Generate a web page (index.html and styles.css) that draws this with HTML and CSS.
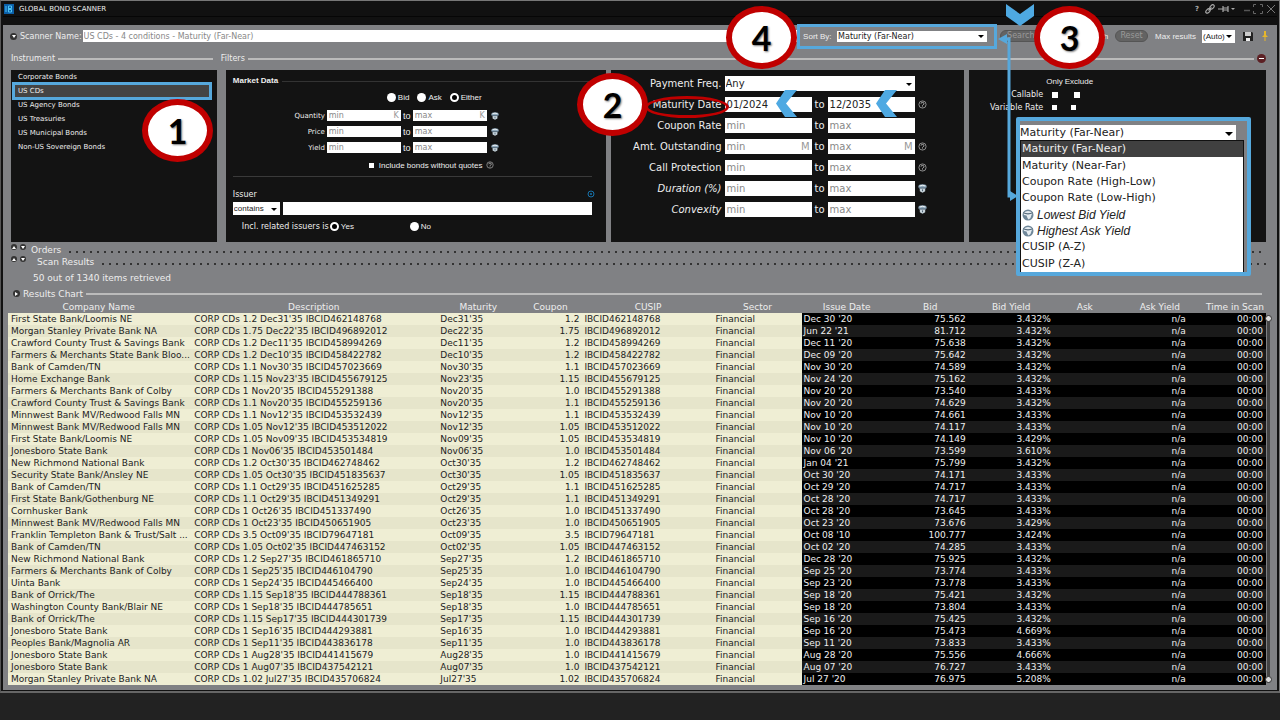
FILE: index.html
```html
<!DOCTYPE html>
<html lang="en">
<head>
<meta charset="utf-8">
<title>Global Bond Scanner</title>
<link rel="stylesheet" href="styles.css">
</head>
<body>
<svg class="defs" aria-hidden="true">
  <symbol id="help" viewBox="0 0 10 10"><circle cx="5" cy="5" r="4" fill="none" stroke="#999" stroke-width="1"/><path d="M3.4 4a1.6 1.4 0 1 1 2.2 1.3L5 6v.6M5 7.2v.8" fill="none" stroke="#bbb" stroke-width="1"/></symbol>
  <symbol id="globe" viewBox="0 0 12 12"><circle cx="6" cy="6" r="5.500" fill="#6f8799"/><path d="M1.500 4 Q6 0 10.500 4 L9.500 6 L8.500 9 L6.500 10.500 L5.500 9 L4.500 6.500 L2 6Z" fill="#e4ebf0"/><path d="M1.200 3.800Q6 6 10.800 3.800" fill="none" stroke="#54697a" stroke-width="1.200"/></symbol>
  <symbol id="bin" viewBox="0 0 10 10"><ellipse cx="5" cy="3" rx="4.600" ry="2.600" fill="#8fa9bc"/><path d="M2 4.500h6V8L5 9.800 2 8Z" fill="#c6d3db"/><path d="M2 2.200q3-1.400 6 0" fill="none" stroke="#fff"/><path d="M1 4.500h8M5 6v2" stroke="#34495a" stroke-width=".9"/></symbol>
</svg>
<div class="window">
  <header class="titlebar">
    <svg class="logo" viewBox="0 0 10 10"><rect width="10" height="10" fill="#0b5fa8"/><path d="M2 2v6M4.500 2h3v2.500h-3zM4.500 5.500h3V8h-3zM4.500 2v6" fill="none" stroke="#4ec4f4" stroke-width="1"/></svg>
    <h1>GLOBAL BOND SCANNER</h1>
    <div class="wintools">
      <button type="button" aria-label="Help" class="q">?</button>
      <button type="button" aria-label="Link"><svg width="10" height="10" viewBox="0 0 10 10"><g fill="none" stroke="#aaa" stroke-width="1.200"><ellipse cx="7" cy="3" rx="2.600" ry="1.600" transform="rotate(-45 7 3)"/><ellipse cx="3" cy="7" rx="2.600" ry="1.600" transform="rotate(-45 3 7)"/><path d="M3.500 6.500l3-3"/></g></svg></button>
      <button type="button" aria-label="Pin"><svg width="18" height="8" viewBox="0 0 18 8"><path d="M0 4h5M5 1v6M5 3h5M5 5h5M10 1v6" stroke="#aaa" stroke-width="1.200"/><path d="M13 3h4l-2 2z" fill="#aaa"/></svg></button>
      <button type="button" aria-label="Minimize" class="min"><svg width="6" height="8" viewBox="0 0 6 8"><path d="M0 5.500h6" stroke="#555" stroke-width="1.500"/></svg></button>
      <button type="button" aria-label="Maximize"><svg width="10" height="10" viewBox="0 0 10 10"><path d="M.5 3V.5H3M7 .5h2.500V3M9.500 7v2.500H7M3 9.500H.5V7" fill="none" stroke="#666"/></svg></button>
      <button type="button" aria-label="Close"><svg width="10" height="10" viewBox="0 0 10 10"><path d="M1 1l8 8M9 1l-8 8" stroke="#777"/></svg></button>
    </div>
  </header>
  <main>
    <form class="toolbar">
      <i class="dot down"></i>
      <label for="name">Scanner Name:</label>
      <input id="name" class="name" type="text" placeholder="US CDs - 4 conditions - Maturity (Far-Near)">
      <div class="sortbox">
        <label for="sort" class="ar">Sort By:</label>
        <span class="sel grow"><select id="sort"><option>Maturity (Far-Near)</option></select></span>
      </div>
      <button type="button" class="pill search">Search</button>
      <button type="button" class="plain ar">Search</button>
      <button type="button" class="pill reset">Reset</button>
      <label for="max" class="ar max">Max results</label>
      <span class="sel auto"><select id="max" class="ar"><option>(Auto)</option></select></span>
      <button type="button" class="save" aria-label="Save"><svg width="10" height="10" viewBox="0 0 10 10"><path d="M0 1h9l1 1v8H0z" fill="#222"/><path d="M2 1h6v4H2z" fill="#ccc"/><path d="M3 7h4v3H3z" fill="#eee"/></svg></button>
      <button type="button" class="pin" aria-label="Pin scanner"><svg width="6" height="10" viewBox="0 0 6 10"><path d="M2 0h2v4l2 2H0l2-2zM2.500 6h1v4h-1z" fill="#e5b62c"/></svg></button>
    </form>

    <div class="criteria">
      <section class="instrument">
        <h2 class="rule">Instrument</h2>
        <ul class="panel">
          <li><button type="button">Corporate Bonds</button></li>
          <li class="on"><button type="button">US CDs</button></li>
          <li><button type="button">US Agency Bonds</button></li>
          <li><button type="button">US Treasuries</button></li>
          <li><button type="button">US Municipal Bonds</button></li>
          <li><button type="button">Non-US Sovereign Bonds</button></li>
        </ul>
      </section>
      <section class="filters">
        <h2 class="rule">Filters<i class="collapse"></i></h2>
        <div class="panels">
          <div class="panel market">
            <h3>Market Data</h3>
            <div class="radios ar">
              <label><input type="radio" name="side">Bid</label>
              <label><input type="radio" name="side">Ask</label>
              <label><input type="radio" name="side" checked>Either</label>
            </div>
            <div class="grid small">
              <label for="q1">Quantity</label><span class="unit" data-u="K"><input id="q1" placeholder="min"></span><span class="to">to</span><span class="unit" data-u="K"><input placeholder="max" aria-label="Quantity max"></span><svg><use href="#bin"/></svg>
              <label for="p1">Price</label><span class="unit"><input id="p1" placeholder="min"></span><span class="to">to</span><span class="unit"><input placeholder="max" aria-label="Price max"></span><svg><use href="#bin"/></svg>
              <label for="y1">Yield</label><span class="unit"><input id="y1" placeholder="min"></span><span class="to">to</span><span class="unit"><input placeholder="max" aria-label="Yield max"></span><svg><use href="#bin"/></svg>
            </div>
            <div class="quotes ar"><label><input type="checkbox">Include bonds without quotes</label><svg><use href="#help"/></svg></div>
            <hr>
            <div class="issuerhead"><label for="issuer">Issuer</label><svg width="8" height="8" viewBox="0 0 8 8"><circle cx="4" cy="4" r="3" fill="none" stroke="#1673ad"/><circle cx="4" cy="4" r="1" fill="#1673ad"/></svg></div>
            <div class="issuer">
              <span class="sel"><select class="ar" aria-label="Match"><option>contains</option></select></span>
              <input id="issuer" type="text">
            </div>
            <div class="related"><span>Incl. related issuers is</span>
              <label class="ar yes"><input type="radio" name="rel" checked>Yes</label>
              <label class="ar"><input type="radio" name="rel">No</label>
            </div>
          </div>
          <div class="panel">
            <div class="grid big">
              <label for="freq">Payment Freq.</label><span class="sel wide"><select id="freq"><option>Any</option></select></span><i></i>
              <label for="md">Maturity Date</label><span class="unit"><input id="md" value="01/2024"></span><span class="to">to</span><span class="unit"><input value="12/2035" aria-label="Maturity to"></span><svg><use href="#help"/></svg>
              <label for="cr">Coupon Rate</label><span class="unit"><input id="cr" placeholder="min"></span><span class="to">to</span><span class="unit"><input placeholder="max" aria-label="Coupon max"></span><i></i>
              <label for="ao">Amt. Outstanding</label><span class="unit" data-u="M"><input id="ao" placeholder="min"></span><span class="to">to</span><span class="unit" data-u="M"><input placeholder="max" aria-label="Amount max"></span><svg><use href="#help"/></svg>
              <label for="cp">Call Protection</label><span class="unit"><input id="cp" placeholder="min"></span><span class="to">to</span><span class="unit"><input placeholder="max" aria-label="Protection max"></span><svg><use href="#help"/></svg>
              <label for="du" class="it">Duration (%)</label><span class="unit"><input id="du" placeholder="min"></span><span class="to">to</span><span class="unit"><input placeholder="max" aria-label="Duration max"></span><svg><use href="#bin"/></svg>
              <label for="cv" class="it">Convexity</label><span class="unit"><input id="cv" placeholder="min"></span><span class="to">to</span><span class="unit"><input placeholder="max" aria-label="Convexity max"></span><svg><use href="#bin"/></svg>
            </div>
          </div>
          <div class="panel flags">
            <div class="flaghead ar"><span>Only</span><span>Exclude</span></div>
            <div class="flag"><span>Callable</span><input type="checkbox" aria-label="Callable only"><input type="checkbox" aria-label="Callable exclude"></div>
            <div class="flag tiny"><span>Variable Rate</span><input type="checkbox" aria-label="Variable only"><input type="checkbox" aria-label="Variable exclude"></div>
          </div>
        </div>
      </section>
    </div>

    <div class="dots"><i class="dot up"></i><i class="dot down"></i><span>Orders</span></div>
    <div class="dots second"><i class="dot up"></i><i class="dot down"></i><span>Scan Results</span></div>
    <p class="count">50 out of 1340 items retrieved</p>
    <h2 class="rule chart"><i class="dot right"></i>Results Chart</h2>
    <div class="results">
      <table>
        <colgroup><col class="c1"><col class="c2"><col class="c3"><col class="c4"><col class="c5"><col class="c6"><col class="c7"><col class="c8"><col class="c9"><col class="c10"><col class="c11"><col class="c12"></colgroup>
        <thead><tr><th>Company Name</th><th>Description</th><th>Maturity</th><th>Coupon</th><th>CUSIP</th><th>Sector</th><th>Issue Date</th><th>Bid</th><th>Bid Yield</th><th>Ask</th><th>Ask Yield</th><th>Time in Scan</th></tr></thead>
        <tbody id="rows"></tbody>
      </table>
      <div class="track"></div>
    </div>
  </main>

  <div class="mark hilite"></div>
  <div class="mark oval"></div>
  <svg class="mark chev a" viewBox="0 0 21 27"><path d="M9 0h12L10 13.500 21 27H9L0 13.500z" fill="#4ea9e2"/></svg>
  <svg class="mark chev b" viewBox="0 0 21 27"><path d="M9 0h12L10 13.500 21 27H9L0 13.500z" fill="#4ea9e2"/></svg>
  <svg class="mark chev c" viewBox="0 0 28 22"><path d="M0 0l14 10L28 0v12L14 22 0 12z" fill="#4ea9e2"/></svg>
  <svg class="mark link" viewBox="0 0 20 168"><path d="M5 5h6v157h4" fill="none" stroke="#56a8dc" stroke-width="3"/><path d="M0 5l9-5v10zM20 162l-8-5v10z" fill="#56a8dc"/></svg>
  <div class="mark popup">
    <span class="sel"><select aria-label="Sort order"><option>Maturity (Far-Near)</option></select></span>
    <ul role="listbox">
      <li class="on" role="option">Maturity (Far-Near)</li>
      <li role="option">Maturity (Near-Far)</li>
      <li role="option">Coupon Rate (High-Low)</li>
      <li role="option">Coupon Rate (Low-High)</li>
      <li role="option" class="ar it"><svg><use href="#globe"/></svg>Lowest Bid Yield</li>
      <li role="option" class="ar it"><svg><use href="#globe"/></svg>Highest Ask Yield</li>
      <li role="option">CUSIP (A-Z)</li>
      <li role="option">CUSIP (Z-A)</li>
    </ul>
  </div>
  <div class="mark step s1">1</div>
  <div class="mark step s2">2</div>
  <div class="mark step s3">3</div>
  <div class="mark step s4">4</div>
</div>
<script src="rows.js"></script>
</body>
</html>
```
FILE: styles.css
```css
* { box-sizing: border-box; }
body { margin: 0; background: #222; font-family: "DejaVu Sans", Verdana, sans-serif; font-size: 8px; color: #eee; }
h1, h2, h3, p, ul { margin: 0; padding: 0; font-weight: normal; }
ul { list-style: none; }
button { border: 0; padding: 0; background: none; color: inherit; font: inherit; text-align: left; }
input, select { font: inherit; color: #222; background: #fff; border: 0; border-radius: 0; margin: 0; padding: 0 2px; min-width: 0; outline: 0; }
input::placeholder { color: #888; opacity: 1; }
svg { display: block; }
.defs { position: absolute; width: 0; height: 0; }
.ar { font-family: "Liberation Sans", Arial, sans-serif; font-size: 8px; }
.it { font-style: italic; }

.window { position: relative; border: 1px solid #777; border-left-color: #555; border-bottom: 2px solid #666; background: #111; padding: 0 2px 1px; }
.titlebar { display: flex; align-items: center; height: 16px; margin-bottom: 8px; padding: 0 1px; border-bottom: 1px solid #060606; }
.logo { width: 10px; height: 10px; }
.titlebar h1 { font-size: 7px; margin-left: 5px; }
.wintools { margin-left: auto; display: flex; align-items: center; gap: 3px; }
.wintools .q { font-size: 7px; font-weight: bold; color: #aaa; margin-right: 3px; }
.wintools .min { margin-left: 5px; }

main { background: #808184; padding: 4px 11px 5px 5px; }
.toolbar { display: flex; align-items: center; height: 14px; padding-left: 2px; margin-right: -2px; }
.dot { width: 7px; height: 7px; border-radius: 50%; background: #333; display: flex; align-items: center; justify-content: center; flex: none; }
.dot::after { content: ""; border: 2px solid transparent; }
.dot.down::after { border-top: 3px solid #fff; border-bottom: 0; }
.dot.up::after { border-bottom: 3px solid #fff; border-top: 0; }
.dot.right::after { border-left: 3px solid #fff; border-right: 0; }
.toolbar > label { margin: 0 1px 0 3px; }
.name { flex: 1; height: 12px; padding: 0 1px; }
.sortbox { display: flex; align-items: center; width: 200px; height: 25px; border: 3px solid #56a8dc; padding: 0 7px 0 3px; }
.sortbox label { flex: none; width: 34px; }
.sel { position: relative; display: flex; }
.sel select { appearance: none; width: 100%; height: 100%; }
.sel::after { content: ""; position: absolute; right: 3px; top: 50%; margin-top: -1px; border: 3px solid transparent; border-top-color: #000; border-bottom: 0; pointer-events: none; }
.grow { flex: 1; height: 11px; }
.grow select { padding: 0 1px; }
.pill { height: 12px; padding: 0 6px; border-radius: 6px; background: #636363; border: 1px solid #555; color: #999; font-size: 8px; line-height: 10px; }
.pill.search { margin-left: 3px; width: 60px; }
.pill.reset { width: 33px; padding: 0; text-align: center; }
.plain { width: 48px; margin-right: 7px; text-align: right; }
.toolbar .max { margin: 0 6px 0 7px; }
.auto { width: 33px; height: 13px; }
.auto select { padding: 0 1px; }
.save { margin-left: 8px; }
.pin { margin-left: 9px; }

.criteria { display: grid; grid-template-columns: 206fr 1041fr; gap: 9px; margin: 6px 0 0 3px; }
.rule { display: flex; align-items: center; gap: 3px; font-size: 8px; height: 19px; }
.rule::after { content: ""; flex: 1; height: 2px; background: #bbb; order: 1; }
.filters .rule { margin-left: -5px; }
.instrument .rule { margin-right: 4px; }
.collapse { order: 2; width: 9px; height: 9px; border-radius: 50%; background: #5c2024; display: flex; align-items: center; justify-content: center; }
.collapse::after { content: ""; width: 5px; height: 1px; background: #fff; }
.panel { background: #131313; height: 172px; margin-top: 2px; }
.panels { display: grid; grid-template-columns: 380fr 354fr 297fr; gap: 5px; }
.instrument li { height: 14px; padding-left: 3px; margin: 0 7px 0 4px; display: flex; align-items: center; }
.instrument li.on { background: #444; }
.instrument li, .small > label { font-size: 7px; }

.market { padding: 5px 14px 0 7px; }
.market h3 { display: flex; align-items: center; gap: 4px; font: bold 8px/12px "Liberation Sans", Arial, sans-serif; }
.market h3::after { content: ""; flex: 1; height: 1px; background: #333; }
.radios { display: flex; gap: 8px; margin: 5px 0 8px 154px; height: 10px; }
.radios label, .related label { display: flex; align-items: center; gap: 2px; }
input[type=radio] { appearance: none; width: 9px; height: 9px; border-radius: 50%; background: #fff; padding: 0; }
input[type=radio]:checked { background: #000; border: 2px solid #fff; }
input[type=checkbox] { appearance: none; width: 6px; height: 6px; padding: 0; }
.grid { display: grid; align-items: center; }
.grid > label { text-align: right; }
.grid .unit { position: relative; display: flex; height: 100%; }
.unit input { width: 100%; }
.unit::after { content: attr(data-u); position: absolute; right: 2px; top: 0; bottom: 0; display: flex; align-items: center; color: #999; }
.to { text-align: center; }
.small { grid-template-columns: 94px 74px 12px 74px 12px; grid-auto-rows: 11px; row-gap: 5px; }
.small > label { padding-right: 2px; }
.small svg { width: 8px; height: 8px; justify-self: end; }
.small .to { font: 9px "Liberation Sans", Arial, sans-serif; }
.quotes { display: flex; align-items: center; gap: 4px; height: 12px; margin: 6px 0 5px 136px; }
.quotes label { display: flex; align-items: center; gap: 5px; }
.quotes input { width: 5px; height: 5px; }
.quotes svg { width: 8px; height: 8px; }
hr { border: 0; height: 1px; background: #3a3a3a; margin: 0; }
.issuerhead { display: flex; justify-content: space-between; align-items: center; height: 10px; margin: 12px -3px 3px 0; }
.issuer { display: flex; gap: 3px; height: 13px; }
.issuer .sel { width: 47px; }
.issuer select { padding: 0 1px; }
.issuer > input { flex: 1; }
.related { display: flex; align-items: center; height: 12px; margin: 5px 0 0 9px; }
.related span { width: 88px; }
.related .yes { width: 80px; }

.big { padding: 6px 0 0; grid-template-columns: 114px 87px 16px 87px 12px; grid-auto-rows: 15px; row-gap: 6px; font-size: 10px; }
.big > label { padding-right: 3px; }
.big .wide { grid-column: 2 / 5; height: 100%; }
.big .wide select { padding: 0 1px; }
.big svg { width: 9px; height: 9px; justify-self: end; }

.flags { padding-top: 5px; }
.flaghead { display: flex; gap: 2px; margin-left: 77px; height: 13px; align-items: center; }
.flag { display: flex; align-items: center; height: 13px; gap: 16px; }
.flag span { width: 74px; text-align: right; margin-right: -7px; white-space: nowrap; }
.flag.tiny { gap: 14px; }
.flag.tiny span { margin-right: -5px; }
.flag.tiny input { width: 5px; height: 5px; }

.dots { display: flex; align-items: center; gap: 3px; height: 12px; margin: 2px 0 0 3px; font-size: 9px; }
.dots.second { margin-top: 0; }
.dots span { margin-left: 2px; }
.dots.second span { margin-left: 8px; }
.dots .dot { width: 6px; height: 6px; align-self: flex-start; }
.dots::after { content: ""; flex: 1; height: 2px; margin: 3px 0 0 5px; background: repeating-linear-gradient(90deg, #333 0 2px, transparent 2px 7px); }
.count { font-size: 9px; line-height: 12px; margin: 4px 0 4px 25px; }
.chart { font-size: 9px; height: 11px; margin: 0 4px 2px 5px; }
.results { display: flex; margin-right: -9px; }
table { flex: 1; width: 100%; border-collapse: collapse; table-layout: fixed; font-size: 9px; line-height: 11px; }
th { font-weight: normal; padding: 0; height: 12px; text-align: center; white-space: nowrap; }
td { height: 12px; padding: 0 3px 0 2px; white-space: nowrap; color: #222; background: #efeed4; }
td:first-child { padding: 0 0 0 3px; }
td:nth-child(2) { padding-left: 5px; }
tbody tr:nth-child(even) td { background: #e6e5cb; }
td:nth-child(n+7) { background: #000; color: #eee; }
tbody tr:nth-child(even) td:nth-child(n+7) { background: #1a1a1a; }
td:nth-child(4), td:nth-child(n+8) { text-align: right; }
td:nth-child(11) { padding-right: 18px; }
.c1 { width: 181px; } .c2 { width: 249px; } .c3 { width: 80px; } .c4 { width: 64px; }
.c5 { width: 131px; } .c6 { width: 88px; } .c7 { width: 90px; } .c8 { width: 77px; }
.c9 { width: 85px; } .c10 { width: 62px; } .c11 { width: 88px; } .c12 { width: 62px; }
.track { display: flex; flex-direction: column; justify-content: space-between; align-items: center; width: 3px; margin: 14px 5px 2px 1px; border-radius: 2px; background: #444; }
.track::before, .track::after { content: ""; width: 5px; height: 5px; margin: 0 -1px; border-radius: 50%; border: 1px solid #333; background: #ddd; }

.mark { position: absolute; }
.hilite { left: 11px; top: 81px; width: 200px; height: 18px; border: 3px solid #56a8dc; }
.oval { left: 644px; top: 95px; width: 84px; height: 22px; border: 3px solid #c00000; border-radius: 50%; }
.chev { width: 21px; height: 27px; }
.a { left: 775px; top: 89px; }
.b { left: 875px; top: 89px; }
.c { left: 1005px; top: 3px; width: 28px; height: 22px; }
.link { left: 997px; top: 33px; width: 20px; height: 168px; }
.popup { left: 1015px; top: 116px; width: 235px; height: 159px; border: 4px solid #56a8dc; border-radius: 2px; background: #808184; padding: 4px 3px 0 0; font-size: 11px; }
.popup .sel { height: 15px; margin-right: 8px; }
.popup select { padding: 0; }
.popup .sel::after { border-width: 4px 4px 0; }
.popup ul { display: flex; flex-direction: column; height: 132px; background: #fff; color: #222; border: 1px solid #111; border-width: 1px 1px 0; }
.popup li { display: flex; align-items: center; flex: 1; min-height: 0; padding-left: 1px; line-height: 14px; }
.popup li.on { background: #404040; color: #eee; }
.popup .ar { font-size: 12px; gap: 3px; }
.popup svg { width: 12px; height: 12px; }
.step { width: 71px; height: 63px; border: 6px solid #c00000; border-radius: 50%; background: #fff; color: #000; display: flex; align-items: center; justify-content: center; font: bold 34px/1 Lato, sans-serif; text-shadow: 1px 1px 2px #777; }
.s1 { left: 141px; top: 98px; }
.s2 { left: 576px; top: 72px; }
.s3 { left: 1033px; top: 5px; }
.s4 { left: 725px; top: 5px; }
```
FILE: rows.js
```javascript
// company | description coupon | maturity | coupon | cusip number | issue date | bid | bid yield
const data = `First State Bank/Loomis NE|1.2|Dec31'35|1.2|462148768|Dec 30 '20|75.562|3.432
Morgan Stanley Private Bank NA|1.75|Dec22'35|1.75|496892012|Jun 22 '21|81.712|3.432
Crawford County Trust & Savings Bank|1.2|Dec11'35|1.2|458994269|Dec 11 '20|75.638|3.432
Farmers & Merchants State Bank Bloo...|1.2|Dec10'35|1.2|458422782|Dec 09 '20|75.642|3.432
Bank of Camden/TN|1.1|Nov30'35|1.1|457023669|Nov 30 '20|74.589|3.432
Home Exchange Bank|1.15|Nov23'35|1.15|455679125|Nov 24 '20|75.162|3.432
Farmers & Merchants Bank of Colby|1|Nov20'35|1.0|455291388|Nov 20 '20|73.540|3.433
Crawford County Trust & Savings Bank|1.1|Nov20'35|1.1|455259136|Nov 20 '20|74.629|3.432
Minnwest Bank MV/Redwood Falls MN|1.1|Nov12'35|1.1|453532439|Nov 10 '20|74.661|3.433
Minnwest Bank MV/Redwood Falls MN|1.05|Nov12'35|1.05|453512022|Nov 10 '20|74.117|3.433
First State Bank/Loomis NE|1.05|Nov09'35|1.05|453534819|Nov 10 '20|74.149|3.429
Jonesboro State Bank|1|Nov06'35|1.0|453501484|Nov 06 '20|73.599|3.610
New Richmond National Bank|1.2|Oct30'35|1.2|462748462|Jan 04 '21|75.799|3.432
Security State Bank/Ansley NE|1.05|Oct30'35|1.05|451835637|Oct 30 '20|74.171|3.433
Bank of Camden/TN|1.1|Oct29'35|1.1|451625285|Oct 29 '20|74.717|3.433
First State Bank/Gothenburg NE|1.1|Oct29'35|1.1|451349291|Oct 28 '20|74.717|3.433
Cornhusker Bank|1|Oct26'35|1.0|451337490|Oct 28 '20|73.645|3.433
Minnwest Bank MV/Redwood Falls MN|1|Oct23'35|1.0|450651905|Oct 23 '20|73.676|3.429
Franklin Templeton Bank & Trust/Salt ...|3.5|Oct09'35|3.5|79647181|Oct 08 '10|100.777|3.424
Bank of Camden/TN|1.05|Oct02'35|1.05|447463152|Oct 02 '20|74.285|3.433
New Richmond National Bank|1.2|Sep27'35|1.2|461865710|Dec 28 '20|75.925|3.432
Farmers & Merchants Bank of Colby|1|Sep25'35|1.0|446104790|Sep 25 '20|73.774|3.433
Uinta Bank|1|Sep24'35|1.0|445466400|Sep 23 '20|73.778|3.433
Bank of Orrick/The|1.15|Sep18'35|1.15|444788361|Sep 18 '20|75.421|3.432
Washington County Bank/Blair NE|1|Sep18'35|1.0|444785651|Sep 18 '20|73.804|3.433
Bank of Orrick/The|1.15|Sep17'35|1.15|444301739|Sep 16 '20|75.425|3.432
Jonesboro State Bank|1|Sep16'35|1.0|444293881|Sep 16 '20|75.473|4.669
Peoples Bank/Magnolia AR|1|Sep11'35|1.0|443836178|Sep 11 '20|73.833|3.433
Jonesboro State Bank|1|Aug28'35|1.0|441415679|Aug 28 '20|75.556|4.666
Jonesboro State Bank|1|Aug07'35|1.0|437542121|Aug 07 '20|76.727|3.433
Morgan Stanley Private Bank NA|1.02|Jul27'35|1.02|435706824|Jul 27 '20|76.975|5.208`;

const body = document.getElementById("rows");
for (const line of data.split("\n")) {
  const [company, rate, maturity, coupon, id, issued, bid, bidYield] = line.split("|");
  const cusip = "IBCID" + id;
  const cells = [company, `CORP CDs ${rate} ${maturity} ${cusip}`, maturity, coupon, cusip,
    "Financial", issued, bid, bidYield + "%", "", "n/a", "00:00"];
  const tr = body.insertRow();
  for (const text of cells) tr.insertCell().textContent = text;
}
```
